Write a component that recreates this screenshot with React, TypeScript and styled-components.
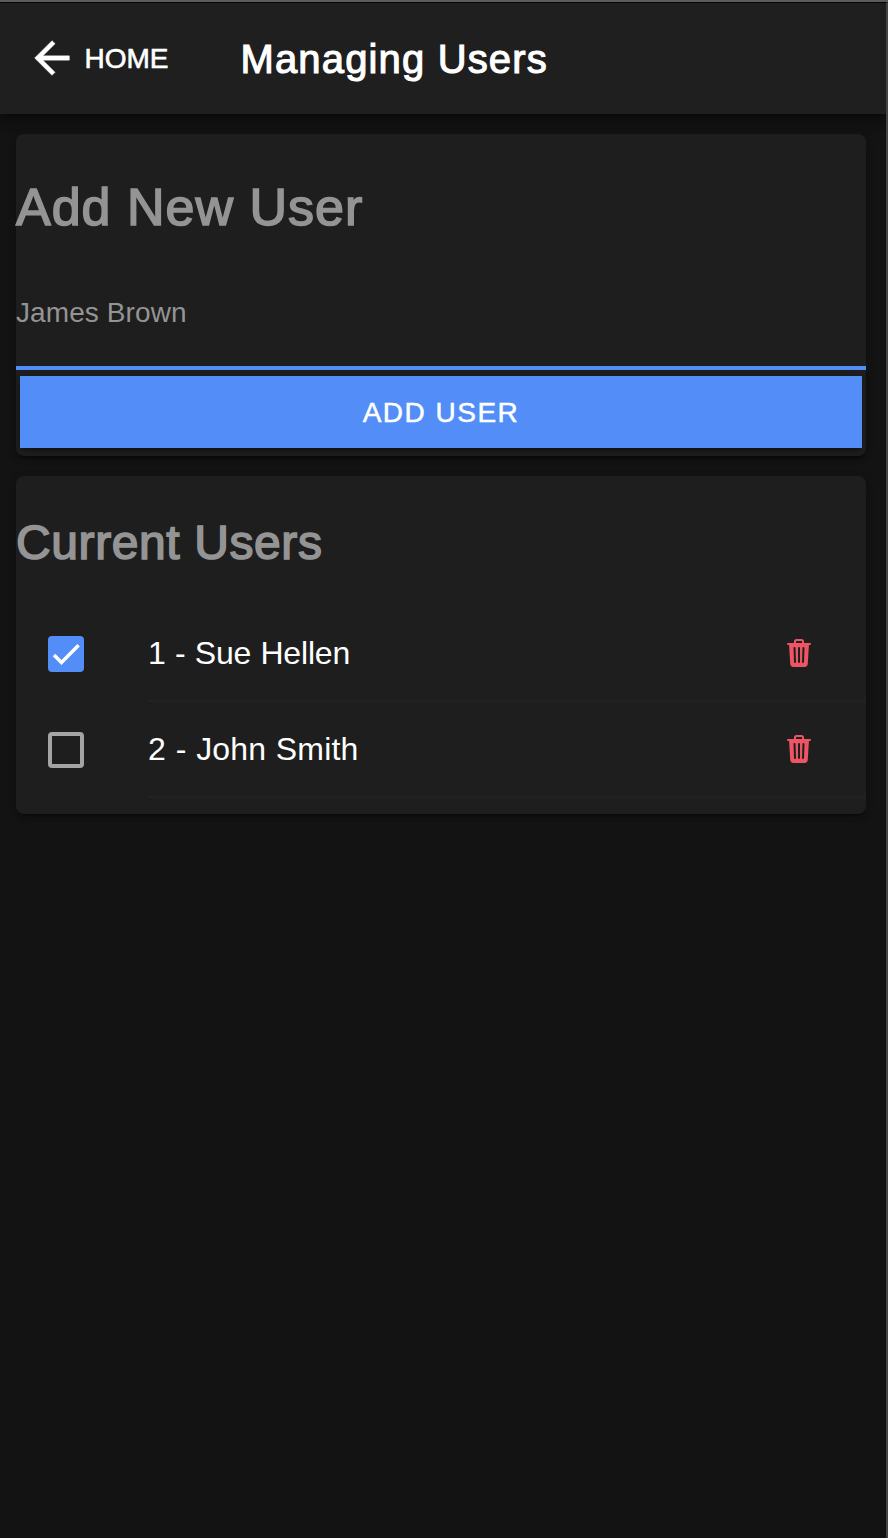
import React, { useState } from "react";
import styled, { createGlobalStyle } from "styled-components";
import { IoTrash } from "react-icons/io5";

const GlobalStyle = createGlobalStyle`
  * { box-sizing: border-box; }
  body {
    margin: 0;
    background: #131313;
    color: #fff;
    font-family: "Liberation Sans", Arial, sans-serif;
  }
  button { font-family: inherit; }
`;

const Screen = styled.div`
  height: 1538px;
  overflow: hidden;
  display: flex;
  flex-direction: column;
  border-top: 2px solid #5b5b61;
  background: #131313;
`;

const Body = styled.div`
  flex: 1;
  display: flex;
  flex-direction: column;
  border-top: 1px solid #050505;
  border-right: 2px solid #454547;
`;

const Toolbar = styled.header`
  height: 111px;
  flex: none;
  display: flex;
  align-items: center;
  padding-left: 25.5px;
  background: #1f1f1f;
  box-shadow: 0 4px 8px -2px rgba(0, 0, 0, 0.4), 0 8px 10px rgba(0, 0, 0, 0.14),
    0 2px 20px rgba(0, 0, 0, 0.12);
  clip-path: inset(0 0 -30px 0);
`;

const BackButton = styled.button`
  display: flex;
  align-items: center;
  width: 215px;
  padding: 0;
  border: 0;
  background: none;
  color: #fff;
  font-size: 28px;
  line-height: 32px;
  -webkit-text-stroke: 0.6px currentColor;

  svg {
    width: 52px;
    height: 52px;
    margin: 0 7px 1px 0;
    fill: currentColor;
    stroke: currentColor;
    stroke-width: 4;
  }
`;

const Title = styled.h1`
  margin: 0;
  font-size: 40px;
  font-weight: 400;
  line-height: 48px;
  letter-spacing: 1.15px;
  -webkit-text-stroke: 1.1px currentColor;
`;

const Content = styled.main`
  display: flex;
  flex-direction: column;
  gap: 20px;
  padding: 20px 20px 0 16px;
`;

const Card = styled.section<{ $height: number }>`
  height: ${(p) => p.$height}px;
  display: flex;
  flex-direction: column;
  border-radius: 8px;
  background: #1e1e1e;
  box-shadow: 0 6px 2px -4px rgba(0, 0, 0, 0.2), 0 4px 4px rgba(0, 0, 0, 0.14),
    0 2px 10px rgba(0, 0, 0, 0.12);
`;

const Heading = styled.h2<{ $size: number; $top: number; $spacing: number }>`
  margin: ${(p) => p.$top}px 0 0;
  height: 60px;
  color: #949494;
  font-size: ${(p) => p.$size}px;
  font-weight: 400;
  line-height: 60px;
  letter-spacing: ${(p) => p.$spacing}px;
  -webkit-text-stroke: 1.6px currentColor;
`;

const NameInput = styled.input`
  display: block;
  width: 100%;
  height: 109px;
  margin-top: 24px;
  padding: 0 0 1px;
  border: 0;
  border-bottom: 4px solid #528df8;
  outline: 0;
  background: none;
  color: #fff;
  font: 28px "Liberation Sans", Arial, sans-serif;
  letter-spacing: 0.1px;

  &::placeholder {
    color: #949494;
    opacity: 1;
  }
`;

const AddButton = styled.button`
  height: 72px;
  margin: 6px 4px 0;
  padding: 1px 0 0;
  border: 0;
  background: #528df8;
  color: #fff;
  font-size: 28px;
  line-height: 71px;
  letter-spacing: 1.5px;
  -webkit-text-stroke: 0.5px currentColor;
  box-shadow: 0 6px 2px -4px rgba(0, 0, 0, 0.2), 0 4px 4px rgba(0, 0, 0, 0.14),
    0 2px 10px rgba(0, 0, 0, 0.12);
`;

const UserList = styled.ul`
  list-style: none;
  margin: 33px 0 0;
  padding: 0;
`;

const UserRow = styled.li`
  display: flex;
  align-items: center;
  height: 96px;
  padding-left: 32px;
`;

const Check = styled.button<{ $on: boolean }>`
  width: 36px;
  height: 36px;
  flex: none;
  padding: 0;
  border: 4px solid ${(p) => (p.$on ? "#528df8" : "#a4a4a4")};
  border-radius: 4px;
  background: ${(p) => (p.$on ? "#528df8" : "transparent")};

  svg {
    display: block;
    width: 28px;
    height: 28px;
    fill: none;
    stroke: #fff;
    stroke-width: 3;
  }
`;

const RowBody = styled.div`
  flex: 1;
  height: 96px;
  display: flex;
  align-items: center;
  justify-content: space-between;
  margin-left: 64px;
  padding-right: 51px;
  border-bottom: 2px solid #222;
  font-size: 32px;
`;

const UserLabel = styled.span<{ $spacing: number }>`
  word-spacing: 0.6px;
  letter-spacing: ${(p) => p.$spacing}px;
`;

const TrashButton = styled.button`
  display: flex;
  padding: 0;
  border: 0;
  background: none;
  color: #ed5564;
  font-size: 32px;
`;

const initialUsers = [
  { id: 1, name: "Sue Hellen", active: true, spacing: -0.18 },
  { id: 2, name: "John Smith", active: false, spacing: 0.17 },
];

export default function App() {
  const [users, setUsers] = useState(initialUsers);
  const [name, setName] = useState("");

  const addUser = () => {
    if (!name.trim()) return;
    setUsers([...users, { id: users.length + 1, name, active: false, spacing: 0 }]);
    setName("");
  };
  const toggle = (id: number) =>
    setUsers(users.map((u) => (u.id === id ? { ...u, active: !u.active } : u)));
  const remove = (id: number) => setUsers(users.filter((u) => u.id !== id));

  return (
    <Screen>
      <GlobalStyle />
      <Body>
        <Toolbar>
          <BackButton>
            <svg viewBox="0 0 512 512">
              <path d="M427 234.625H167.296l119.702-119.702L256 85 85 256l171 171 29.922-29.924-118.626-119.701H427v-42.75z" />
            </svg>
            HOME
          </BackButton>
          <Title>Managing Users</Title>
        </Toolbar>
        <Content>
          <Card $height={322}>
            <Heading $size={52} $top={43} $spacing={1}>
              Add New User
            </Heading>
            <NameInput
              placeholder="James Brown"
              value={name}
              onChange={(e) => setName(e.target.value)}
            />
            <AddButton onClick={addUser}>ADD USER</AddButton>
          </Card>
          <Card $height={338}>
            <Heading $size={48} $top={37} $spacing={0.6}>
              Current Users
            </Heading>
            <UserList>
              {users.map((user) => (
                <UserRow key={user.id}>
                  <Check $on={user.active} onClick={() => toggle(user.id)}>
                    {user.active && (
                      <svg viewBox="0 0 24 24">
                        <path d="M1.73 12.91 8.1 19.28 22.79 4.59" />
                      </svg>
                    )}
                  </Check>
                  <RowBody>
                    <UserLabel $spacing={user.spacing}>
                      {user.id} - {user.name}
                    </UserLabel>
                    <TrashButton onClick={() => remove(user.id)}>
                      <IoTrash />
                    </TrashButton>
                  </RowBody>
                </UserRow>
              ))}
            </UserList>
          </Card>
        </Content>
      </Body>
    </Screen>
  );
}
